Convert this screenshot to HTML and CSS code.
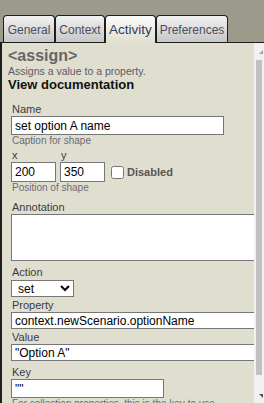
FILE: index.html
```html
<!DOCTYPE html>
<html lang="en">
<head>
    <meta charset="UTF-8">
    <meta name="viewport" content="width=device-width, initial-scale=1.0">
    <title>Shape Properties</title>
    <link rel="stylesheet" href="styles.css">
</head>
<body>
    <div class="top-bar"></div>
    <div class="tabs">
        <div class="tab tab-general">General</div>
        <div class="tab tab-context">Context</div>
        <div class="tab tab-activity active">Activity</div>
        <div class="tab tab-prefs">Preferences</div>
    </div>
    <div class="panel">
        <div class="panel-body">
            <div class="title">&lt;assign&gt;</div>
            <div class="desc">Assigns a value to a property.</div>
            <div class="doc-link">View documentation</div>

            <div class="fields">
                <label class="lbl">Name</label>
                <input class="inp inp-name" type="text" value="set option A name">
                <div class="hint">Caption for shape</div>

                <div class="xy-row">
                    <div class="xy-col">
                        <label class="lbl">x</label>
                        <input class="inp inp-xy" type="text" value="200">
                    </div>
                    <div class="xy-col">
                        <label class="lbl">y</label>
                        <input class="inp inp-xy" type="text" value="350">
                    </div>
                    <label class="disabled"><input type="checkbox"> Disabled</label>
                </div>
                <div class="hint">Position of shape</div>

                <label class="lbl lbl-annot">Annotation</label>
                <textarea class="annot"></textarea>

                <label class="lbl lbl-action">Action</label>
                <select class="action">
                    <option>set</option>
                </select>

                <label class="lbl lbl-prop">Property</label>
                <input class="inp inp-wide" type="text" value="context.newScenario.optionName">

                <label class="lbl lbl-value">Value</label>
                <input class="inp inp-wide" type="text" value="&quot;Option A&quot;">

                <label class="lbl lbl-key">Key</label>
                <input class="inp inp-key" type="text" value="&quot;&quot;">
                <div class="hint">For collection properties, this is the key to use</div>
            </div>
        </div>
        <div class="scrollbar">
            <div class="arrow-up"></div>
            <div class="thumb"></div>
            <div class="arrow-down"></div>
        </div>
    </div>
</body>
</html>
```

FILE: styles.css
```css
body {
    margin: 0;
    background-color: #9c9a8b;
    font-family: "Liberation Sans", Arial, sans-serif;
    overflow: hidden;
}
.top-bar {
    height: 15px;
}
.tabs {
    display: flex;
    padding-left: 3px;
    height: 27px;
    align-items: flex-start;
}
.tab {
    box-sizing: border-box;
    height: 27px;
    padding-top: 7px;
    text-align: center;
    font-size: 12px;
    line-height: 14px;
    color: #4c4c5c;
    border: 1px solid #1e1e1e;
    border-bottom: none;
    border-radius: 4px 4px 0 0;
    background: linear-gradient(#f2f2f2, #c6c6c6);
}
.tab-general { width: 52px; }
.tab-context { width: 50px; }
.tab-activity { width: 51px; }
.tab-prefs { width: 72px; }
.tab.active {
    position: relative;
    z-index: 1;
    height: 28px;
    font-size: 13.5px;
    color: #33395a;
    background: linear-gradient(#fbfbfb, #e0dfcf);
}
.panel {
    display: flex;
    height: 360px;
    border-top: 1px solid #1e1e1e;
    border-left: 2px solid #1e1e1e;
    background-color: #e0dfcf;
}
.panel-body {
    flex: 1;
    overflow: hidden;
    padding: 4px 0 0 6px;
}
.title {
    font-size: 16px;
    line-height: 18px;
    font-weight: bold;
    color: #666;
}
.desc {
    font-size: 10.5px;
    line-height: 12px;
    color: #5a5a66;
}
.doc-link {
    font-size: 13px;
    line-height: 15px;
    font-weight: bold;
    color: #111;
}
.fields {
    margin: 11px 0 0 3px;
    width: 300px;
}
.lbl {
    display: block;
    font-size: 11px;
    line-height: 13px;
    color: #3a3a48;
    padding-left: 1px;
}
.hint {
    font-size: 10px;
    line-height: 12px;
    color: #6a6a7a;
    padding-left: 1px;
    white-space: nowrap;
}
.inp {
    display: block;
    box-sizing: border-box;
    margin: 0;
    height: 19px;
    padding: 0 3px;
    border: 1px solid #767676;
    background: #fff;
    font-family: "Liberation Sans", Arial, sans-serif;
    font-size: 12px;
    color: #000;
    outline: none;
}
.inp-name { width: 213px; }
.inp-wide { width: 260px; height: 17px; }
.inp-key { width: 153px; }
.xy-row {
    display: flex;
    align-items: flex-end;
    gap: 4px;
    margin-top: 2px;
}
.inp-xy {
    width: 45px;
    height: 20px;
}
.disabled {
    display: flex;
    align-items: center;
    height: 20px;
    margin-left: 2px;
    font-size: 11px;
    font-weight: bold;
    color: #555;
}
.disabled input {
    width: 13px;
    height: 13px;
    margin: 0 3px 0 0;
}
.lbl-annot { margin-top: 7px; }
.annot {
    display: block;
    box-sizing: border-box;
    width: 260px;
    height: 47px;
    margin: 0;
    border: 1px solid #767676;
    background: #fff;
    resize: none;
}
.lbl-action { margin-top: 5px; }
.action {
    display: block;
    box-sizing: border-box;
    width: 63px;
    height: 17px;
    margin-top: 1px;
    padding: 0 0 0 2px;
    border: 1px solid #767676;
    border-radius: 0;
    background: #fff;
    font-family: "Liberation Sans", Arial, sans-serif;
    font-size: 12px;
    color: #000;
}
.lbl-prop { margin-top: 2px; }
.lbl-value { margin-top: 2px; }
.lbl-key { margin-top: 5px; }
.scrollbar {
    width: 10px;
    background-color: #f1f1f1;
    display: flex;
    flex-direction: column;
    align-items: center;
}
.arrow-up {
    margin-top: 7px;
    margin-left: 4px;
    width: 0;
    height: 0;
    border-left: 4px solid transparent;
    border-bottom: 4px solid #a3a3a3;
}
.thumb {
    margin-top: 6px;
    width: 6px;
    height: 315px;
    background-color: #c1c1c1;
}
.arrow-down {
    margin-top: 19px;
    margin-left: 4px;
    width: 0;
    height: 0;
    border-left: 4px solid transparent;
    border-top: 4px solid #505050;
}
```
